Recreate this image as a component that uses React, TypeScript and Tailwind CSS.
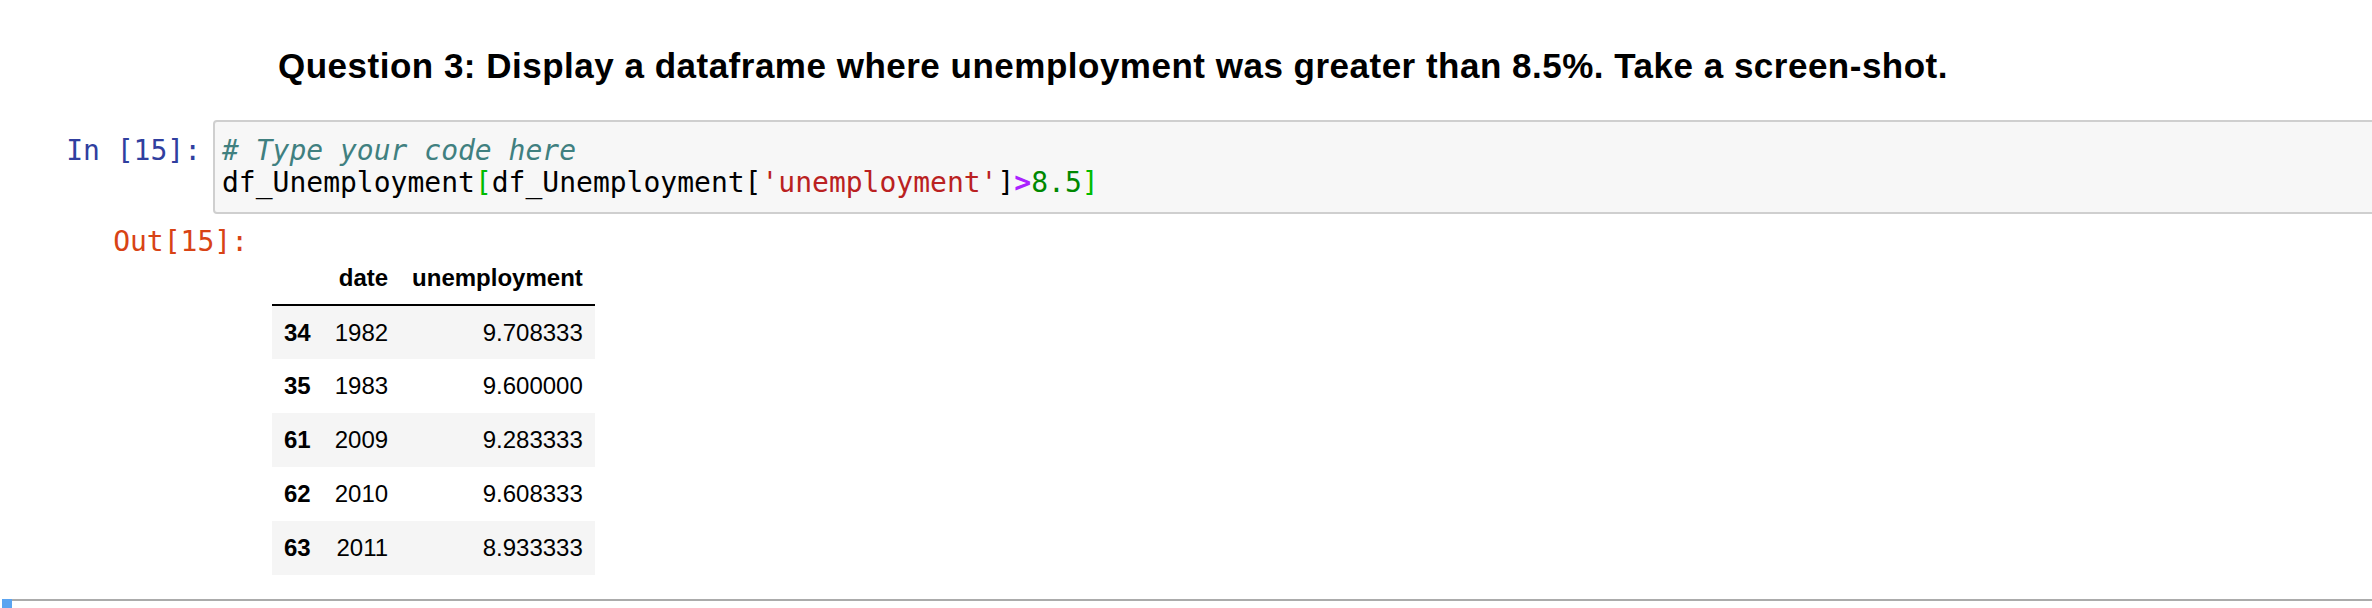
import React from "react";

const rows = [
  ["34", "1982", "9.708333"],
  ["35", "1983", "9.600000"],
  ["61", "2009", "9.283333"],
  ["62", "2010", "9.608333"],
  ["63", "2011", "8.933333"],
];

const mono = "font-['DejaVu_Sans_Mono','Liberation_Mono',monospace]";
const sans = "font-['Liberation_Sans',Arial,sans-serif]";

export default function App() {
  return (
    <div className="relative h-[608px] w-[2372px] overflow-hidden bg-white">
      {/* Markdown heading */}
      <div className={`pt-[46px] pl-[278px] ${sans}`}>
        <h3 className="whitespace-nowrap text-[35px] font-bold leading-[39px] tracking-[0.5px] text-black">
          Question 3: Display a dataframe where unemployment was greater than 8.5%. Take a screen-shot.
        </h3>
      </div>

      {/* Input cell */}
      <div className={`mt-[35px] flex ${mono} text-[28px]`}>
        <div className="w-[213px] shrink-0 pr-[12px] pt-[15px] text-right leading-[32px] text-[#303F9F] whitespace-pre">
          In [15]:
        </div>
        <div className="w-[2300px] shrink-0 rounded-[4px] border-2 border-[#cfcfcf] bg-[#f7f7f7] pl-[7px] pt-[13px] pb-[13px] leading-[32px] whitespace-pre">
          <div className="italic text-[#408080]"># Type your code here</div>
          <div className="text-black">
            df_Unemployment<span className="text-[#00bb00]">[</span>df_Unemployment[
            <span className="text-[#BA2121]">'unemployment'</span>]
            <span className="font-bold text-[#AA22FF]">&gt;</span>
            <span className="text-[#008800]">8.5</span>
            <span className="text-[#00bb00]">]</span>
          </div>
        </div>
      </div>

      {/* Output */}
      <div className="mt-[12px] flex">
        <div className={`w-[248px] shrink-0 text-right text-[28px] leading-[32px] text-[#D84315] whitespace-pre ${mono}`}>
          Out[15]:
        </div>
        <div className={`ml-[24px] pt-[25px] ${sans} text-[24px] text-black`}>
          <table className="border-collapse">
            <thead>
              <tr className="h-[54px] border-b-2 border-black">
                <th className="px-[12px] align-middle"></th>
                <th className="px-[12px] text-right align-middle font-bold">date</th>
                <th className="px-[12px] text-right align-middle font-bold">unemployment</th>
              </tr>
            </thead>
            <tbody>
              {rows.map((r, i) => (
                <tr key={r[0]} className={`h-[54px] ${i % 2 === 0 ? "bg-[#f5f5f5]" : "bg-white"}`}>
                  <th className="px-[12px] text-right align-middle font-bold">{r[0]}</th>
                  <td className="px-[12px] text-right align-middle">{r[1]}</td>
                  <td className="px-[12px] text-right align-middle">{r[2]}</td>
                </tr>
              ))}
            </tbody>
          </table>
        </div>
      </div>

      {/* Next (selected) cell top edge */}
      <div className="mt-[24px] flex pl-[2px]">
        <div className="h-[9px] w-[10px] shrink-0 bg-[#5ba4f0]"></div>
        <div className="h-[2px] flex-1 bg-[#ababab]"></div>
      </div>
    </div>
  );
}
